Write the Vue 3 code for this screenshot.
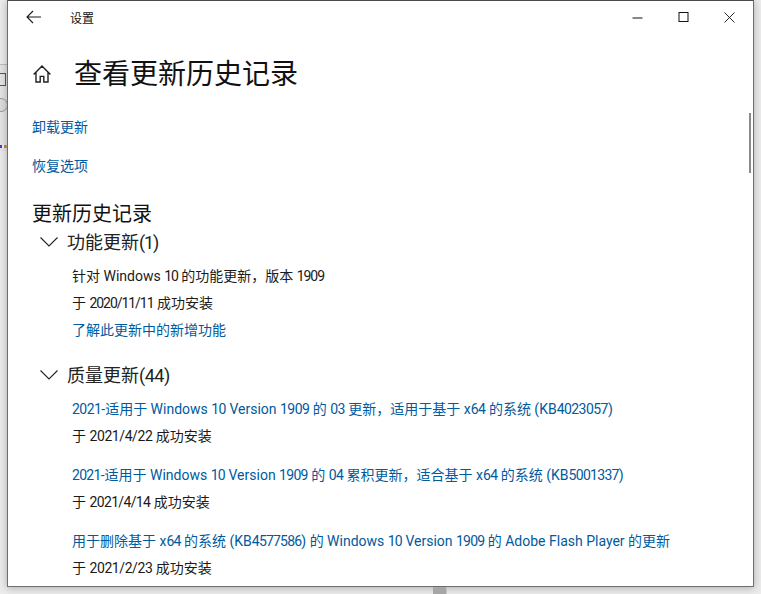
<script setup>
const parts = (text) => text.split(/(\d[\d/]*)/).map((t, i) => ({ t, num: i % 2 === 1 }))

const quality = [
  { title: '2021-适用于 Windows 10 Version 1909 的 03 更新，适用于基于 x64 的系统 (KB4023057)', date: '于 2021/4/22 成功安装', track: -0.55, dateTrack: -0.42 },
  { title: '2021-适用于 Windows 10 Version 1909 的 04 累积更新，适合基于 x64 的系统 (KB5001337)', date: '于 2021/4/14 成功安装', track: -0.7, dateTrack: -0.65 },
  { title: '用于删除基于 x64 的系统 (KB4577586) 的 Windows 10 Version 1909 的 Adobe Flash Player 的更新', date: '于 2021/2/23 成功安装', track: -0.8, dateTrack: -0.42 },
].map((q) => ({ ...q, titleParts: parts(q.title), dateParts: parts(q.date) }))

const featureName = parts('针对 Windows 10 的功能更新，版本 1909')
const featureDate = parts('于 2020/11/11 成功安装')
</script>

<template>
  <div class="desk">
    <div class="edge-left">
      <span class="edge-glyph"></span>
      <span class="edge-circle"></span>
      <span class="edge-strip"></span>
    </div>
    <div class="edge-bottom"></div>
    <main class="win">
      <header class="titlebar">
        <svg class="back" width="16" height="14" viewBox="0 0 16 14"><path d="M7 1 1 7l6 6M1 7h14" fill="none" stroke="#1a1a1a" stroke-width="1.1"/></svg>
        <span class="apptitle">设置</span>
        <div class="controls">
          <svg width="11" height="11" viewBox="0 0 11 11"><path d="M0.5 6h10" stroke="#111" stroke-width="1" fill="none"/></svg>
          <svg width="11" height="11" viewBox="0 0 11 11"><rect x="1" y="0.5" width="9" height="9" stroke="#111" stroke-width="1" fill="none"/></svg>
          <svg width="11" height="11" viewBox="0 0 11 11"><path d="M0.5 0.5 10.5 10.5M10.5 0.5 0.5 10.5" stroke="#111" stroke-width="0.9" fill="none"/></svg>
        </div>
      </header>

      <div class="pagehead">
        <svg class="home" width="18" height="18" viewBox="0 0 18 18"><path d="M0.6 9.4 9 1 17.4 9.4M3 7.2V17H7.2V11.4H10.8V17H15V7.2" fill="none" stroke="#222" stroke-width="1.4"/></svg>
        <h1>查看更新历史记录</h1>
      </div>

      <div class="content">
        <a class="link toplink">卸载更新</a>
        <a class="link toplink second">恢复选项</a>
        <h2>更新历史记录</h2>

        <div class="group">
          <svg class="chev" width="18" height="10" viewBox="0 0 18 10"><path d="M0.5 0.5 9 9l8.5-8.5" fill="none" stroke="#222" stroke-width="1.1"/></svg>
          <span>功能更新<span class="count">(1)</span></span>
        </div>
        <div class="items first">
          <p><span v-for="(s, i) in featureName" :key="i" :class="{ numtight: s.num }">{{ s.t }}</span></p>
          <p><span v-for="(s, i) in featureDate" :key="i" :class="{ numtight: s.num }">{{ s.t }}</span></p>
          <p><a class="link">了解此更新中的新增功能</a></p>
        </div>

        <div class="group quality">
          <svg class="chev" width="18" height="10" viewBox="0 0 18 10"><path d="M0.5 0.5 9 9l8.5-8.5" fill="none" stroke="#222" stroke-width="1.1"/></svg>
          <span>质量更新<span class="count wide">(44)</span></span>
        </div>
        <div class="items">
          <div v-for="q in quality" :key="q.title" class="entry">
            <p><a class="link"><span v-for="(s, i) in q.titleParts" :key="i" :style="s.num ? { letterSpacing: q.track + 'px' } : null">{{ s.t }}</span></a></p>
            <p><span v-for="(s, i) in q.dateParts" :key="i" :style="s.num ? { letterSpacing: q.dateTrack + 'px' } : null">{{ s.t }}</span></p>
          </div>
        </div>
      </div>
      <div class="thumb"></div>
    </main>
  </div>
</template>

<style scoped>
.desk {
  position: relative;
  width: 761px;
  height: 594px;
  overflow: hidden;
  background: #ececec;
  font-family: Roboto, "Noto Sans CJK SC", sans-serif;
}
.edge-left {
  position: absolute;
  left: 0;
  top: 64px;
  width: 7px;
  height: 86px;
  background: #e4e4e4;
  border-top: 1px solid #bdbdbd;
}
.edge-glyph {
  position: absolute;
  left: 0;
  top: 8px;
  width: 5px;
  height: 11px;
  border: 1px solid #556;
  border-left: 0;
}
.edge-circle {
  position: absolute;
  left: -6px;
  top: 33px;
  width: 12px;
  height: 12px;
  border: 1px solid #999;
  border-radius: 50%;
  background: #ddd;
}
.edge-strip {
  position: absolute;
  left: 0;
  top: 80px;
  width: 7px;
  height: 3px;
  background: linear-gradient(90deg, #4a3fb5 0 2px, #f0f0f0 2px 4px, #c77 4px 6px, #da3 6px);
}
.edge-bottom {
  position: absolute;
  left: 433px;
  top: 587px;
  width: 13px;
  height: 7px;
  background: #a6a6a6;
  border-right: 1px solid #c4c4c4;
  z-index: 1;
}
.win {
  position: absolute;
  left: 7px;
  top: 0;
  width: 745px;
  height: 585px;
  background: #fff;
  border: 1px solid #6e6e6e;
  border-top-color: #4a4a4a;
  box-shadow: 0 1px 8px rgba(0, 0, 0, 0.28);
  overflow: hidden;
}
.titlebar {
  display: flex;
  align-items: center;
  height: 32px;
  padding-left: 18px;
}
.back {
  flex: none;
}
.apptitle {
  margin-left: 28px;
  font-size: 12px;
  color: #111;
}
.controls {
  margin-left: auto;
  margin-right: 18px;
  display: flex;
  gap: 35px;
  align-items: center;
}
.pagehead {
  display: flex;
  align-items: center;
  margin-top: 19px;
  height: 44px;
  padding-left: 25px;
}
.home {
  flex: none;
}
h1 {
  margin: 2px 0 0 23px;
  font-size: 28px;
  line-height: 44px;
  font-weight: 400;
  color: #111;
}
.content {
  padding-left: 24px;
  padding-top: 21px;
}
.link {
  color: #005a9e;
  font-size: 14px;
  line-height: 20px;
}
.toplink {
  display: block;
}
.toplink.second {
  margin-top: 19px;
}
h2 {
  margin: 25px 0 0;
  font-size: 20px;
  line-height: 26px;
  font-weight: 400;
  color: #111;
}
.group {
  display: flex;
  align-items: center;
  gap: 9px;
  margin: 1px 0 0 8px;
  height: 26px;
  font-size: 18px;
  color: #222;
}
.group.quality {
  margin-top: 21px;
}
.count {
  letter-spacing: -1.2px;
}
.count.wide {
  letter-spacing: -0.5px;
}
.chev {
  flex: none;
  margin-top: 2px;
}
.items {
  margin: 12px 0 0 40px;
  font-size: 14px;
  color: #1a1a1a;
}
.items p {
  margin: 0 0 7px;
  line-height: 20px;
  white-space: nowrap;
}
.numtight {
  letter-spacing: -1.05px;
}
.entry {
  margin-bottom: 19px;
}
.thumb {
  position: absolute;
  right: 2px;
  top: 112px;
  width: 2px;
  height: 60px;
  background: #8a8a8a;
}
</style>

<style>
html, body { margin: 0; background: #ececec; }
</style>
